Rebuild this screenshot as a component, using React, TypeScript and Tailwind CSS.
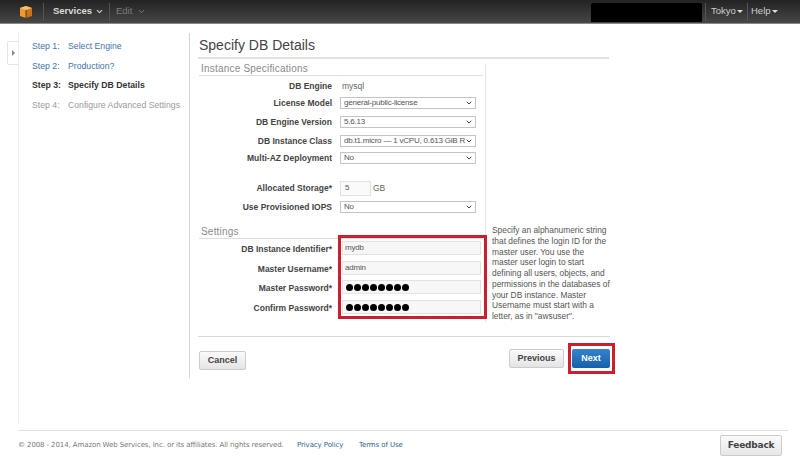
import React from "react";
import { ChevronDown } from "lucide-react";

const Caret = ({ className = "" }: { className?: string }) => (
  <span className={`inline-block w-0 h-0 border-x-[3px] border-x-transparent border-t-[3px] ${className}`} />
);

const Select = ({ value }: { value: string }) => (
  <div className="w-[136px] h-[12px] shrink-0 bg-white border border-[#c4c4c4] flex items-center pl-[3px] pr-[2px] text-[8px] tracking-[-0.2px] text-[#555] overflow-hidden">
    <span className="flex-1 whitespace-nowrap overflow-hidden">{value}</span>
    <ChevronDown size={8} strokeWidth={3} className="text-[#444] shrink-0" />
  </div>
);

const Row = ({ label, mt, children }: { label: string; mt: string; children: React.ReactNode }) => (
  <div className={`flex items-center gap-[8px] h-[14px] ${mt}`}>
    <div className="w-[133px] shrink-0 text-right text-[8.5px] font-bold text-[#444] whitespace-nowrap">{label}</div>
    {children}
  </div>
);

const TextInput = ({ children }: { children: React.ReactNode }) => (
  <div className="w-[139px] h-[14px] shrink-0 ml-[2px] -mt-[2px] bg-[#f7f7f7] border border-[#e2e2e2] flex items-center px-[2px] text-[8px] tracking-[-0.2px] text-[#555]">{children}</div>
);

const Dots = () => (
  <span className="flex gap-[1px] pl-[1px]">
    {[0, 1, 2, 3, 4, 5, 6, 7].map((i) => (
      <span key={i} className="w-[7px] h-[7px] rounded-full bg-black" />
    ))}
  </span>
);

const Step = ({ n, name, tone }: { n: string; name: string; tone: string }) => (
  <div className={`flex h-[19.5px] items-center text-[8.7px] whitespace-nowrap ${tone}`}>
    <span className="w-[36px]">Step {n}:</span>
    <span>{name}</span>
  </div>
);

const App: React.FC = () => {
  return (
    <div className="w-[800px] h-[460px] bg-white overflow-hidden flex flex-col [font-family:'Liberation_Sans',Arial,sans-serif]">
      {/* Top nav */}
      <div className="h-[24px] shrink-0 flex items-center bg-gradient-to-b from-[#232323] to-[#474747] border-b border-[#8a8a8a] text-[9.5px]">
        <div className="w-[43px] flex justify-center pl-[8px]">
          <svg width="14" height="14" viewBox="0 0 14 14">
            <path d="M7 1 L13 3 V11 L7 13 Z" fill="#c9741a" />
            <path d="M7 1 L1 3 V11 L7 13 Z" fill="#f09a2c" />
            <path d="M7 1 L13 3 L7 5 L1 3 Z" fill="#f7c06a" />
            <path d="M6.6 5 H7.4 V13 H6.6 Z" fill="#2b2b2b" />
          </svg>
        </div>
        <div className="w-px h-[18px] bg-[#555]" />
        <span className="ml-[9px] w-[37px] font-bold text-[#dcdcdc]">Services</span>
        <ChevronDown size={9} strokeWidth={3} className="ml-[5px] text-[#ccc]" />
        <div className="w-px h-[18px] bg-[#555] ml-[5px]" />
        <span className="ml-[6px] w-[18px] text-[#7d7d7d]">Edit</span>
        <ChevronDown size={9} strokeWidth={2.5} className="ml-[3px] text-[#7d7d7d]" />
        <div className="flex-1" />
        <div className="w-[111px] h-[19px] mt-[1px] bg-black rounded-t-[2px]" />
        <div className="w-px h-[18px] bg-[#555] ml-[3px]" />
        <span className="ml-[5px] w-[25px] text-[#cfcfcf]">Tokyo</span>
        <Caret className="ml-[1px] border-t-[#ddd]" />
        <div className="w-px h-[18px] bg-[#555] ml-[4px]" />
        <span className="ml-[3px] w-[19px] text-[#cfcfcf]">Help</span>
        <Caret className="ml-[2px] mr-[22px] border-t-[#ddd]" />
      </div>

      {/* Page */}
      <div className="flex-1 flex pt-[9px]">
        <div className="w-[18px] shrink-0 pt-[8px] flex justify-end">
          <div className="w-[11px] h-[24px] bg-white border border-r-0 border-[#e4e4e4] rounded-l-[2px] flex items-center justify-center">
            <span className="w-0 h-0 border-y-[3px] border-y-transparent border-l-[3px] border-l-[#888]" />
          </div>
        </div>

        <div className="w-[171px] h-[391px] shrink-0 border-l border-[#eee] pl-[13px] pt-[4px]">
          <Step n="1" name="Select Engine" tone="text-[#3f74a8]" />
          <Step n="2" name="Production?" tone="text-[#3f74a8]" />
          <Step n="3" name="Specify DB Details" tone="font-bold text-[#333]" />
          <Step n="4" name="Configure Advanced Settings" tone="text-[#9a9a9a]" />
        </div>

        {/* Main column */}
        <div className="w-[424px] h-[345px] shrink-0 border-l border-[#d4d4d4] pl-[9px]">
          <h1 className="text-[14px] leading-[24px] text-[#444]">Specify DB Details</h1>
          <div className="h-[2px] w-[411px] -ml-[1px] bg-[#e2e2e2]" />

          <div className="relative flex w-[412px]">
            <div className="w-[286px] shrink-0">
              <div className="w-[284px] h-[14px] mt-[3px] text-[10px] leading-[14px] tracking-[0.2px] text-[#8a8a8a] border-b border-[#ddd] pl-[2px]">Instance Specifications</div>
              <Row label="DB Engine" mt="mt-[3px]"><span className="text-[8.5px] text-[#666] ml-[2px]">mysql</span></Row>
              <Row label="License Model" mt="mt-[3px]"><Select value="general-public-license" /></Row>
              <Row label="DB Engine Version" mt="mt-[5px]"><Select value="5.6.13" /></Row>
              <Row label="DB Instance Class" mt="mt-[5px]"><Select value="db.t1.micro — 1 vCPU, 0.613 GiB RAM" /></Row>
              <Row label="Multi-AZ Deployment" mt="mt-[3px]"><Select value="No" /></Row>
              <Row label="Allocated Storage*" mt="mt-[16px]">
                <div className="w-[31px] h-[15px] bg-[#fafafa] border border-[#e2e2e2] text-[8px] text-[#555] flex items-center pl-[4px]">5</div>
                <span className="text-[8.5px] text-[#666] -ml-[6px]">GB</span>
              </Row>
              <Row label="Use Provisioned IOPS" mt="mt-[5px]"><Select value="No" /></Row>

              <div className="w-[284px] h-[14px] mt-[11px] text-[10px] leading-[14px] tracking-[0.2px] text-[#8a8a8a] border-b border-[#ddd] pl-[2px]">Settings</div>
              <Row label="DB Instance Identifier*" mt="mt-[3px]"><TextInput>mydb</TextInput></Row>
              <Row label="Master Username*" mt="mt-[6px]"><TextInput>admin</TextInput></Row>
              <Row label="Master Password*" mt="mt-[5px]"><TextInput><Dots /></TextInput></Row>
              <Row label="Confirm Password*" mt="mt-[6px]"><TextInput><Dots /></TextInput></Row>
            </div>

            <div className="border-l border-[#e4e4e4] h-[258px] mt-[5px]" />

            {/* help text sits beside the settings rows */}
            <div className="w-[122px] pl-[6px] pt-[166px] text-[8.4px] leading-[10.75px] text-[#555]">
              <p className="whitespace-nowrap">Specify an alphanumeric string<br />that defines the login ID for the<br />master user. You use the<br />master user login to start<br />defining all users, objects, and<br />permissions in the databases of<br />your DB instance. Master<br />Username must start with a<br />letter, as in "awsuser".</p>
            </div>

            {/* red annotation */}
            <div className="absolute left-[139px] top-[176px] w-[149px] h-[84px] border-[3px] border-[#c8202c]" />
          </div>

          <div className="h-px w-[412px] bg-[#d8d8d8] mt-[14px] -ml-[1px]" />
          <div className="flex w-[411px] mt-[12px]">
            <button className="w-[47px] h-[19px] mt-[2px] rounded-[2px] border border-[#ccc] bg-gradient-to-b from-[#fbfbfb] to-[#e4e4e4] text-[9px] font-bold text-[#444]">Cancel</button>
            <div className="flex-1" />
            <button className="w-[55px] h-[19px] rounded-[2px] border border-[#ccc] bg-gradient-to-b from-[#fbfbfb] to-[#e4e4e4] text-[9px] font-bold text-[#444]">Previous</button>
            <div className="relative ml-[8px]">
              <button className="block w-[38px] h-[19px] rounded-[2px] bg-gradient-to-b from-[#3584cf] to-[#1560a9] text-[9px] font-bold text-white">Next</button>
              <div className="absolute -left-[4px] -top-[6px] w-[47px] h-[31px] border-[3px] border-[#c8202c]" />
            </div>
          </div>
        </div>
      </div>

      {/* Footer */}
      <div className="shrink-0 h-[30px] ml-[18px] mr-[12px] border-t border-[#e2e2e2] flex items-center text-[7px] [font-family:'DejaVu_Sans',sans-serif]">
        <span className="w-[279px] text-[#777] tracking-[-0.1px] whitespace-nowrap">© 2008 - 2014, Amazon Web Services, Inc. or its affiliates. All rights reserved.</span>
        <span className="w-[62px] text-[#2f5f8a] tracking-[-0.1px]">Privacy Policy</span>
        <span className="text-[#2f5f8a] tracking-[-0.1px]">Terms of Use</span>
        <div className="flex-1" />
        <button className="w-[62px] h-[21px] mr-[6px] rounded-[2px] border border-[#ccc] bg-gradient-to-b from-[#fbfbfb] to-[#e6e6e6] text-[9px] font-bold text-[#444] tracking-[-0.2px]">Feedback</button>
      </div>
    </div>
  );
};

export default App;
